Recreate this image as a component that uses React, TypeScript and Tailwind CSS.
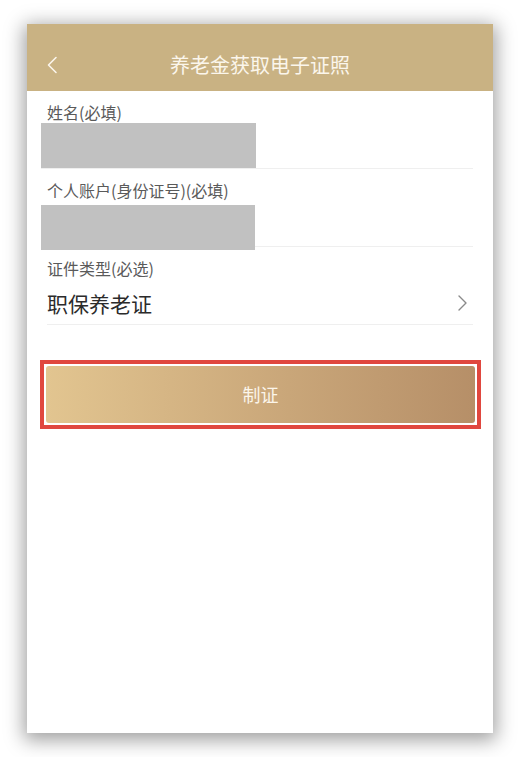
import React from "react";

const font = { fontFamily: '"Noto Sans CJK SC", "Noto Sans", sans-serif' };

const Divider: React.FC<{ className?: string }> = ({ className }) => (
    <div className={"h-px bg-[#efefef] " + (className ?? "")} />
);

const App: React.FC = () => {
    return (
        <div className="min-h-[757px] w-[520px] bg-white pt-[24px] pl-[27px]" style={font}>
            <div className="flex h-[709px] w-[466px] flex-col bg-white shadow-[0_4px_18px_3px_rgba(0,0,0,0.38)]">
                {/* Header */}
                <header className="flex h-[67px] items-center bg-[#c9b283] pt-[14px]">
                    <div className="relative flex w-full items-center justify-center">
                        <button className="absolute left-[19px] top-1/2 -translate-y-1/2" aria-label="返回">
                            <svg width="12" height="18" viewBox="0 0 12 18" fill="none">
                                <polyline
                                    points="10,1.5 2.5,9 10,16.5"
                                    stroke="#fbf6ec"
                                    strokeWidth="1.6"
                                    strokeLinecap="round"
                                    strokeLinejoin="round"
                                />
                            </svg>
                        </button>
                        <h1 className="text-[20px] leading-[28px] text-[#fbf6ec]">养老金获取电子证照</h1>
                    </div>
                </header>

                {/* Form */}
                <div className="pl-[14px] pr-[20px]">
                    <div className="pt-[10px]">
                        <div className="pl-[6px] text-[16px] leading-[22px] text-[#5a5a5a]">姓名(必填)</div>
                        <div className="h-[45px] w-[215px] bg-[#c1c1c1]" />
                        <Divider />
                    </div>

                    <div className="pt-[10px]">
                        <div className="pl-[6px] text-[16px] leading-[22px] text-[#5a5a5a]">个人账户(身份证号)(必填)</div>
                        <div className="relative z-10 mt-[4px] -mb-[4px] h-[45px] w-[214px] bg-[#c1c1c1]" />
                        <Divider />
                    </div>

                    <div className="pt-[10px] pl-[6px]">
                        <div className="text-[16px] leading-[22px] text-[#5a5a5a]">证件类型(必选)</div>
                        <div className="flex items-center justify-between pt-[9px] pb-[6px] pr-[6px]">
                            <span className="text-[21px] leading-[30px] text-[#2b2b2b]">职保养老证</span>
                            <svg width="9" height="16" viewBox="0 0 9 16" fill="none">
                                <polyline
                                    points="1,1 8,8 1,15"
                                    stroke="#8a8a8a"
                                    strokeWidth="1.4"
                                    strokeLinecap="round"
                                    strokeLinejoin="round"
                                />
                            </svg>
                        </div>
                        <Divider />
                    </div>
                </div>

                {/* Submit */}
                <div className="ml-[13px] mt-[35px] w-[441px] border-[4px] border-[#e0473f] p-[2px]">
                    <button className="flex h-[57px] w-full items-center justify-center rounded-[3px] bg-gradient-to-r from-[#e2c590] to-[#b68f68] text-[18px] text-[#fbf5ea]">
                        制证
                    </button>
                </div>
            </div>
        </div>
    );
};

export default App;
